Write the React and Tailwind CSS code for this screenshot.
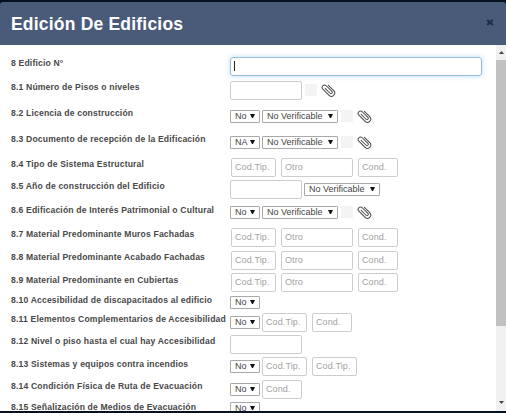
import React from 'react';

function Field({ w, children }) {
  return (
    <div className={`${w} flex h-[19px] shrink-0 items-center rounded-[2px] border border-[#cdcdcd] bg-white pt-[1px] pl-[3px] text-[9px] tracking-[0.1px] text-[#a2a2a2]`}>
      {children}
    </div>
  );
}

function Choice({ w, children }) {
  return (
    <div className={`${w} flex h-[13px] shrink-0 items-center justify-between rounded-[1px] border border-[#a9a9a9] bg-white pr-[4px] pl-[4px] text-[9px] leading-none text-[#444]`}>
      <span>{children}</span>
      <svg className="h-[4px] w-[5px]" viewBox="0 0 5 4"><path d="M0 0h5L3 4H2z" fill="#111" /></svg>
    </div>
  );
}

function Attach() {
  return (
    <>
      <div className="ml-[1px] h-[12px] w-[12px] shrink-0 bg-[#f4f4f4]" />
      <svg className="ml-[1px] h-[16px] w-[16px] shrink-0" viewBox="0 0 16 16" fill="none" stroke="#4a4a4a" strokeWidth="1" strokeLinecap="round">
        <g transform="translate(8.5 8) rotate(-45)">
          <path d="M-1.2-3.5V3.4a1.3 1.3 0 0 0 2.6 0V-4.6a2.3 2.3 0 0 0-4.8 0V4.2a3.3 3.3 0 0 0 6.6 0V-3.4" />
        </g>
      </svg>
    </>
  );
}

const Cod = () => <Field w="w-[45px]">Cod.Tip.</Field>;
const Cond = () => <Field w="w-[40px]">Cond.</Field>;
const Blank = () => <Field w="w-[72px]" />;
const YesNo = ({ children = 'No' }) => <Choice w="w-[30px]">{children}</Choice>;
const Verify = () => <Choice w="w-[76px]">No Verificable</Choice>;

const Licence = ({ value }) => (
  <div className="flex items-center gap-[2px]">
    <YesNo>{value}</YesNo>
    <Verify />
    <Attach />
  </div>
);

const Material = () => (
  <div className="flex items-center gap-[5px] pl-[1px]">
    <Cod />
    <Field w="w-[72px]">Otro</Field>
    <Cond />
  </div>
);

function Row({ h, label, pt = 'pt-0', children }) {
  return (
    <div className={`${h} flex shrink-0 items-start`}>
      <div className={`${pt} w-[219px] shrink-0 text-[8.6px] leading-[14px] font-bold tracking-[0.17px] whitespace-nowrap text-[#484848]`}>{label}</div>
      <div className="flex h-[20px] items-center">{children}</div>
    </div>
  );
}

export default function App() {
  return (
    <div className="flex h-[413px] w-[506px] flex-col overflow-hidden bg-[#07101f] pt-[2px] font-['Liberation_Sans',Arial,sans-serif]">
      <header className="flex h-[43px] shrink-0 items-center justify-between rounded-t-[3px] bg-[#4a5b7a] pr-[12px] pl-[11px]">
        <h1 className="pt-[2px] text-[17.5px] leading-none font-bold tracking-[0.2px] text-white">Edición De Edificios</h1>
        <svg className="mb-[3px] h-[7px] w-[8px]" viewBox="0 0 8 7"><path d="M1.2 1l5.6 5M6.8 1L1.2 6" stroke="#1f2d49" strokeWidth="2.2" /></svg>
      </header>
      <div className="flex h-[366px] shrink-0 bg-white">
        <main className="flex h-full w-[496px] flex-col overflow-hidden pt-[11px] pl-[11px]">
          <Row h="h-[24px]" label="8 Edificio N°">
            <div className="flex h-[19px] w-[252px] items-center rounded-[3px] border border-[#91bfdc] pl-[3px] shadow-[0_0_5px_rgba(102,175,233,0.45)]">
              <span className="h-[10px] w-px bg-[#222]" />
            </div>
          </Row>
          <Row h="h-[26px]" label="8.1 Número de Pisos o niveles">
            <div className="flex items-center gap-[2px]"><Blank /><Attach /></div>
          </Row>
          <Row h="h-[26px]" label="8.2 Licencia de construcción"><Licence value="No" /></Row>
          <Row h="h-[25px]" label="8.3 Documento de recepción de la Edificación"><Licence value="NA" /></Row>
          <Row h="h-[22px]" label="8.4 Tipo de Sistema Estructural"><Material /></Row>
          <Row h="h-[23px]" label="8.5 Año de construcción del Edificio">
            <div className="flex items-center gap-[2px]"><Blank /><Verify /></div>
          </Row>
          <Row h="h-[25px]" label="8.6 Edificación de Interés Patrimonial o Cultural" pt="pt-[1px]"><Licence value="No" /></Row>
          <Row h="h-[23px]" label="8.7 Material Predominante Muros Fachadas"><Material /></Row>
          <Row h="h-[22px]" label="8.8 Material Predominante Acabado Fachadas"><Material /></Row>
          <Row h="h-[20px]" label="8.9 Material Predominante en Cubiertas" pt="pt-[1px]"><Material /></Row>
          <Row h="h-[20px]" label="8.10 Accesibilidad de discapacitados al edificio" pt="pt-[1px]"><YesNo /></Row>
          <Row h="h-[22px]" label="8.11 Elementos Complementarios de Accesibilidad">
            <div className="flex items-center gap-[5px]"><div className="flex items-center gap-[2px]"><YesNo /><Cod /></div><Cond /></div>
          </Row>
          <Row h="h-[22px]" label="8.12 Nivel o piso hasta el cual hay Accesibilidad"><Blank /></Row>
          <Row h="h-[23px]" label="8.13 Sistemas y equipos contra incendios" pt="pt-[1px]">
            <div className="flex items-center gap-[5px]"><div className="flex items-center gap-[2px]"><YesNo /><Cod /></div><Cod /></div>
          </Row>
          <Row h="h-[20px]" label="8.14 Condición Física de Ruta de Evacuación">
            <div className="flex items-center gap-[2px]"><YesNo /><Cond /></div>
          </Row>
          <Row h="h-[14px]" label="8.15 Señalización de Medios de Evacuación" pt="pt-[1px]"><div className="-mt-[2px]"><YesNo /></div></Row>
        </main>
        <aside className="flex h-full w-[10px] flex-col items-center bg-[#f0f0f0]">
          <div className="flex h-[15px] items-center"><svg className="h-[3px] w-[5px]" viewBox="0 0 5 3"><path d="M0 3L2.5 0L5 3z" fill="#444" /></svg></div>
          <div className="h-[266px] w-full bg-[#c1c1c1]" />
          <div className="mt-auto flex h-[17px] items-center"><svg className="h-[3px] w-[5px]" viewBox="0 0 5 3"><path d="M0 0L2.5 3L5 0z" fill="#444" /></svg></div>
        </aside>
      </div>
    </div>
  );
}
